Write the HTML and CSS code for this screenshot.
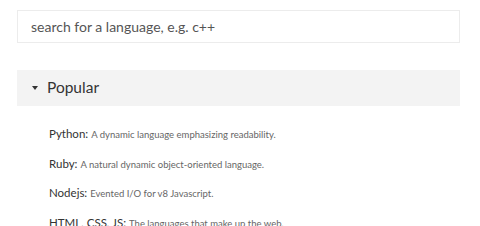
FILE: index.html
```html
<!DOCTYPE html>
<html>

<head>
    <title>Languages</title>
    <link rel="stylesheet" href="styles.css">
</head>

<body>
    <div class="page">
        <input class="search" type="text" placeholder="search for a language, e.g. c++">
        <div class="group">
            <div class="group-header">
                <span class="caret"></span>
                <span class="group-title">Popular</span>
            </div>
            <ul class="langs">
                <li><span class="name">Python:</span><span class="desc">A dynamic language emphasizing readability.</span></li>
                <li><span class="name">Ruby:</span><span class="desc">A natural dynamic object-oriented language.</span></li>
                <li><span class="name">Nodejs:</span><span class="desc">Evented I/O for v8 Javascript.</span></li>
                <li><span class="name">HTML, CSS, JS:</span><span class="desc">The languages that make up the web.</span></li>
            </ul>
        </div>
    </div>
</body>

</html>
```

FILE: styles.css
```css
body {
    margin: 0;
    background: white;
    font-family: Lato, "Noto Sans", sans-serif;
    color: #333;
    overflow: hidden;
}

.page {
    padding: 10px 20px 0 17px;
}

.search {
    display: block;
    box-sizing: border-box;
    width: 100%;
    height: 33px;
    padding: 0 13px;
    border: 1px solid #ececec;
    font-family: inherit;
    font-size: 14px;
    color: #555;
    outline: none;
}

.search::placeholder {
    color: #555;
}

.group {
    margin-top: 27px;
}

.group-header {
    display: flex;
    align-items: center;
    height: 36px;
    padding-left: 15px;
    background: #f3f3f3;
}

.caret {
    width: 0;
    height: 0;
    border-left: 3.5px solid transparent;
    border-right: 3.5px solid transparent;
    border-top: 4px solid #333;
    margin-right: 9px;
}

.group-title {
    font-size: 15.5px;
    color: #333;
    position: relative;
    top: -1px;
}

.langs {
    list-style: none;
    margin: 0;
    padding: 18px 0 0 32px;
}

.langs li {
    height: 29.7px;
    line-height: 16px;
}

.name {
    font-size: 11.5px;
    color: #333;
    margin-right: 3px;
}

.desc {
    font-size: 9.5px;
    color: #666;
}
```
